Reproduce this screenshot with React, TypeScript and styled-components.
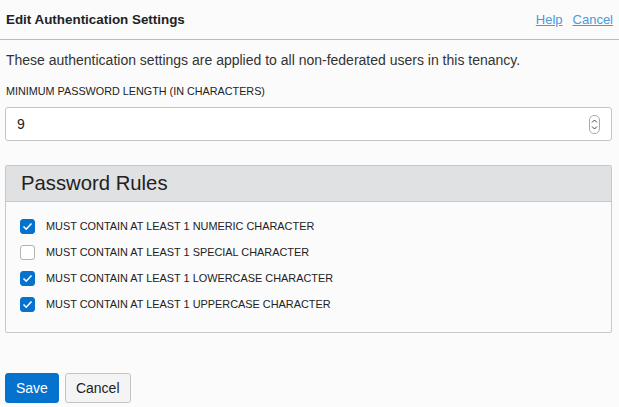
import React from "react";
import styled, { createGlobalStyle } from "styled-components";

const Global = createGlobalStyle`
  html, body { margin: 0; padding: 0; background: #fbfbfb; }
  body { font-family: "Liberation Sans", Arial, sans-serif; color: #333; }
`;

const Page = styled.div`
  width: 619px;
  height: 407px;
  display: flex;
  flex-direction: column;
  box-sizing: border-box;
  overflow: hidden;
`;

const Header = styled.div`
  height: 39px;
  display: flex;
  align-items: center;
  justify-content: space-between;
  padding: 0 6px 0 6px;
  border-bottom: 1px solid #b9b9b9;
  box-sizing: content-box;
`;

const Title = styled.h1`
  margin: 0;
  font-size: 13.4px;
  font-weight: bold;
  color: #222;
`;

const Links = styled.div`
  display: flex;
  gap: 10px;
`;

const Link = styled.a`
  font-size: 13px;
  color: #4a9ad8;
  text-decoration: underline;
  cursor: pointer;
`;

const Body = styled.div`
  padding: 12px 7px 0 5px;
  display: flex;
  flex-direction: column;
`;

const Desc = styled.p`
  margin: 0 0 0 1px;
  font-size: 14px;
  line-height: 16px;
  color: #333;
  white-space: nowrap;
`;

const Label = styled.label`
  margin: 17px 0 0 1px;
  font-size: 10.8px;
  line-height: 13px;
  color: #222;
`;

const InputBox = styled.div`
  margin-top: 9px;
  height: 34px;
  box-sizing: border-box;
  border: 1px solid #c4c4c4;
  border-radius: 3px;
  background: #fff;
  display: flex;
  align-items: center;
  justify-content: space-between;
  padding: 0 11px 0 11px;
  font-size: 14px;
  color: #222;
`;

const Spinner = styled.div`
  width: 9px;
  height: 17px;
  border: 1px solid #aaa;
  border-radius: 5px;
  display: flex;
  align-items: center;
  justify-content: center;
`;

const Panel = styled.div`
  margin-top: 24px;
  border: 1px solid #c8c9ca;
  border-radius: 2px;
  height: 168px;
  box-sizing: border-box;
  display: flex;
  flex-direction: column;
  background: #fbfbfb;
`;

const PanelHeader = styled.div`
  height: 35px;
  background: #dfe1e3;
  border-bottom: 1px solid #c8c9ca;
  display: flex;
  align-items: center;
  padding-left: 15px;
  font-size: 20.3px;
  color: #222;
`;

const Rules = styled.div`
  padding: 17px 14px 0 14px;
  display: flex;
  flex-direction: column;
  gap: 12px;
`;

const Rule = styled.div`
  display: flex;
  align-items: center;
  gap: 11px;
  height: 14px;
  font-size: 10.9px;
  color: #222;
`;

const Box = styled.span<{ $on: boolean }>`
  width: 15px;
  height: 15px;
  box-sizing: border-box;
  border-radius: 3px;
  border: 1px solid ${(p) => (p.$on ? "#0572ce" : "#b4b4b4")};
  background: ${(p) => (p.$on ? "#0572ce" : "#fff")};
  display: flex;
  align-items: center;
  justify-content: center;
`;

const Footer = styled.div`
  margin-top: 40px;
  display: flex;
  gap: 6px;
`;

const Button = styled.button<{ $primary?: boolean }>`
  height: 30px;
  box-sizing: border-box;
  padding: 0 10px;
  font-family: "Liberation Sans", Arial, sans-serif;
  font-size: 14px;
  border-radius: 3px;
  border: 1px solid ${(p) => (p.$primary ? "#0572ce" : "#c4c4c4")};
  background: ${(p) => (p.$primary ? "#0572ce" : "#f4f4f4")};
  color: ${(p) => (p.$primary ? "#fff" : "#222")};
`;

const rules: [string, boolean][] = [
  ["MUST CONTAIN AT LEAST 1 NUMERIC CHARACTER", true],
  ["MUST CONTAIN AT LEAST 1 SPECIAL CHARACTER", false],
  ["MUST CONTAIN AT LEAST 1 LOWERCASE CHARACTER", true],
  ["MUST CONTAIN AT LEAST 1 UPPERCASE CHARACTER", true],
];

export default function App() {
  return (
    <Page>
      <Global />
      <Header>
        <Title>Edit Authentication Settings</Title>
        <Links>
          <Link>Help</Link>
          <Link>Cancel</Link>
        </Links>
      </Header>
      <Body>
        <Desc>These authentication settings are applied to all non-federated users in this tenancy.</Desc>
        <Label>MINIMUM PASSWORD LENGTH (IN CHARACTERS)</Label>
        <InputBox>
          <span>9</span>
          <Spinner>
            <svg width="7" height="13" viewBox="0 0 7 13">
              <path d="M1 4.5 L3.5 2 L6 4.5" fill="none" stroke="#444" strokeWidth="1" />
              <path d="M1 8.5 L3.5 11 L6 8.5" fill="none" stroke="#444" strokeWidth="1" />
            </svg>
          </Spinner>
        </InputBox>
        <Panel>
          <PanelHeader>Password Rules</PanelHeader>
          <Rules>
            {rules.map(([t, on]) => (
              <Rule key={t}>
                <Box $on={on}>
                  {on && (
                    <svg width="11" height="9" viewBox="0 0 11 9">
                      <path d="M1.5 4.5 L4.2 7.2 L9.5 1.5" fill="none" stroke="#fff" strokeWidth="1.6" />
                    </svg>
                  )}
                </Box>
                <span>{t}</span>
              </Rule>
            ))}
          </Rules>
        </Panel>
        <Footer>
          <Button $primary>Save</Button>
          <Button>Cancel</Button>
        </Footer>
      </Body>
    </Page>
  );
}
